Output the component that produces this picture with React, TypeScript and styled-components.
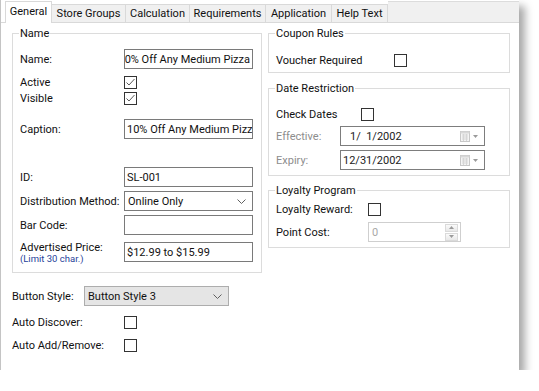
import React from 'react'
import styled, { createGlobalStyle } from 'styled-components'

const GlobalStyle = createGlobalStyle`
  body {
    margin: 0;
    background: #fff;
    font-family: Roboto, "Noto Sans", sans-serif;
    font-size: 11px;
    color: #111;
  }
`;

const Window = styled.div`
  box-sizing: border-box;
  width: 519px;
  height: 370px;
  background: #fff;
  border-left: 1px solid #c4c4c4;
  box-shadow: 6px 6px 8px rgba(0, 0, 0, 0.34);
  display: flex;
  flex-direction: column;
`;

const TabStrip = styled.div`
  display: flex;
  align-items: flex-end;
  height: 22px;
  padding-left: 4px;
  border-bottom: 1px solid #d9d9d9;
`;

const Tab = styled.div<{ $w: number; $active?: boolean }>`
  box-sizing: border-box;
  width: ${p => p.$w}px;
  height: ${p => (p.$active ? 22 : 18)}px;
  margin-bottom: ${p => (p.$active ? -1 : 0)}px;
  padding-bottom: ${p => (p.$active ? 2 : 0)}px;
  display: flex;
  align-items: center;
  justify-content: center;
  background: ${p => (p.$active ? '#fff' : '#f0f0f0')};
  border-top: 1px solid #d9d9d9;
  border-right: 1px solid #d9d9d9;
  white-space: nowrap;
  &:first-child {
    border-left: 1px solid #d9d9d9;
  }
`;

const TabFiller = styled.div`
  flex: 1;
  height: 20px;
  background: #f0f0f0;
  border-top: 1px solid #dcdcdc;
`;

const Body = styled.div`
  display: flex;
  gap: 6px;
  padding: 10px 9px 0 11px;
`;

const Column = styled.div<{ $w: number }>`
  width: ${p => p.$w}px;
  display: flex;
  flex-direction: column;
`;

const GroupBox = styled.div<{ $pt: number; $pb: number; $mt?: number }>`
  position: relative;
  border: 1px solid #dcdcdc;
  padding: ${p => p.$pt}px 7px ${p => p.$pb}px 7px;
  margin-top: ${p => p.$mt || 0}px;
`;

const Legend = styled.span`
  position: absolute;
  top: -8px;
  left: 6px;
  padding: 0 1px;
  line-height: 15px;
  background: #fff;
`;

const Row = styled.div<{ $mt?: number; $h?: number; $top?: boolean }>`
  display: flex;
  align-items: ${p => (p.$top ? 'flex-start' : 'center')};
  height: ${p => p.$h || 20}px;
  margin-top: ${p => p.$mt || 0}px;
`;

const Label = styled.span<{ $w: number; $muted?: boolean }>`
  width: ${p => p.$w}px;
  flex-shrink: 0;
  white-space: nowrap;
  color: ${p => (p.$muted ? '#8d8d8d' : 'inherit')};
`;

const LabelStack = styled.div<{ $w: number }>`
  width: ${p => p.$w}px;
  flex-shrink: 0;
  display: flex;
  flex-direction: column;
  line-height: 12px;
`;

const Hint = styled.span`
  font-size: 9.5px;
  line-height: 10px;
  color: #1f3f9a;
`;

const TextBox = styled.div<{ $w?: number; $end?: boolean }>`
  box-sizing: border-box;
  width: ${p => p.$w || 129}px;
  height: 20px;
  border: 1px solid #7a7a7a;
  background: #fff;
  padding: 0 2px;
  display: flex;
  align-items: center;
  justify-content: ${p => (p.$end ? 'flex-end' : 'flex-start')};
  overflow: hidden;
  white-space: nowrap;
`;

const Select = styled.div<{ $w: number; $flat?: boolean }>`
  box-sizing: border-box;
  width: ${p => p.$w}px;
  height: 20px;
  border: 1px solid ${p => (p.$flat ? '#adadad' : '#7a7a7a')};
  background: ${p => (p.$flat ? '#e5e5e5' : '#fff')};
  padding: 0 6px 0 3px;
  display: flex;
  align-items: center;
  justify-content: space-between;
  white-space: nowrap;
`;

const Check = styled.span`
  box-sizing: border-box;
  width: 13px;
  height: 13px;
  border: 1px solid #333;
  background: #fff;
  display: flex;
  align-items: center;
  justify-content: center;
`;

const DateBox = styled.div<{ $pl: number }>`
  box-sizing: border-box;
  width: 145px;
  height: 20px;
  border: 1px solid #7d7d7d;
  padding: 0 6px 0 ${p => p.$pl}px;
  display: flex;
  align-items: center;
  justify-content: space-between;
  color: #222;
  white-space: pre;
`;

const DateTools = styled.span`
  display: flex;
  align-items: center;
  gap: 3px;
`;

const SpinBox = styled.div`
  box-sizing: border-box;
  width: 93px;
  height: 20px;
  border: 1px solid #cfcfcf;
  padding: 0 2px 0 3px;
  display: flex;
  align-items: center;
  justify-content: space-between;
  color: #a8a8a8;
`;

const SpinButtons = styled.span`
  display: flex;
  flex-direction: column;
  gap: 1px;
`;

const SpinButton = styled.span`
  box-sizing: border-box;
  width: 13px;
  height: 8px;
  border: 1px solid #dadada;
  background: linear-gradient(#fafafa, #e8e8e8);
  display: flex;
  align-items: center;
  justify-content: center;
`;

const Chevron = () => (
  <svg width="9" height="5" viewBox="0 0 9 5">
    <polyline points="0.5,0.5 4.5,4.5 8.5,0.5" fill="none" stroke="#606060" strokeWidth="1" />
  </svg>
);

const CheckBox = ({ checked }: { checked?: boolean }) => (
  <Check>
    {checked && (
      <svg width="11" height="11" viewBox="0 0 11 11">
        <polyline points="1.5,5.5 4,8 9.5,2" fill="none" stroke="#5a5a5a" strokeWidth="1" />
      </svg>
    )}
  </Check>
);

const CalendarIcon = () => (
  <svg width="10" height="11" viewBox="0 0 10 11">
    <rect x="0.5" y="0.5" width="9" height="10" fill="#f4f4f4" stroke="#c8c8c8" />
    <rect x="0.5" y="0.5" width="9" height="2" fill="#d8d8d8" />
    <path d="M2 4h6M2 6h6M2 8h6M3.5 3v7M6.5 3v7" stroke="#d6d6d6" strokeWidth="1" />
  </svg>
);

const Arrow = ({ up }: { up?: boolean }) => (
  <svg width="5" height="3" viewBox="0 0 5 3">
    <polygon points={up ? '0,3 5,3 2.5,0' : '0,0 5,0 2.5,3'} fill="#9a9a9a" />
  </svg>
);

const tabs = [
  { name: 'General', w: 47 },
  { name: 'Store Groups', w: 74 },
  { name: 'Calculation', w: 64 },
  { name: 'Requirements', w: 76 },
  { name: 'Application', w: 66 },
  { name: 'Help Text', w: 56 },
];

const App = () => {
  return (
    <>
      <GlobalStyle />
      <Window>
        <TabStrip>
          {tabs.map((t, i) => (
            <Tab key={t.name} $w={t.w} $active={i === 0}>{t.name}</Tab>
          ))}
          <TabFiller />
        </TabStrip>
        <Body>
          <Column $w={250}>
            <GroupBox $pt={15} $pb={10}>
              <Legend>Name</Legend>
              <Row>
                <Label $w={104}>Name:</Label>
                <TextBox $end>10% Off Any Medium Pizza</TextBox>
              </Row>
              <Row $mt={5} $h={16}>
                <Label $w={104}>Active</Label>
                <CheckBox checked />
              </Row>
              <Row $h={16}>
                <Label $w={104}>Visible</Label>
                <CheckBox checked />
              </Row>
              <Row $mt={13}>
                <Label $w={104}>Caption:</Label>
                <TextBox>10% Off Any Medium Pizza</TextBox>
              </Row>
              <Row $mt={28}>
                <Label $w={104}>ID:</Label>
                <TextBox>SL-001</TextBox>
              </Row>
              <Row $mt={4}>
                <Label $w={104}>Distribution Method:</Label>
                <Select $w={129}>
                  Online Only
                  <Chevron />
                </Select>
              </Row>
              <Row $mt={4}>
                <Label $w={104}>Bar Code:</Label>
                <TextBox />
              </Row>
              <Row $mt={7} $top>
                <LabelStack $w={104}>
                  <span>Advertised Price:</span>
                  <Hint>(Limit 30 char.)</Hint>
                </LabelStack>
                <TextBox>$12.99 to $15.99</TextBox>
              </Row>
            </GroupBox>
            <Row $mt={13}>
              <Label $w={72}>Button Style:</Label>
              <Select $w={145} $flat>
                Button Style 3
                <Chevron />
              </Select>
            </Row>
            <Row $mt={6}>
              <Label $w={112}>Auto Discover:</Label>
              <CheckBox />
            </Row>
            <Row $mt={3}>
              <Label $w={112}>Auto Add/Remove:</Label>
              <CheckBox />
            </Row>
          </Column>
          <Column $w={242}>
            <GroupBox $pt={16} $pb={2}>
              <Legend>Coupon Rules</Legend>
              <Row>
                <Label $w={118}>Voucher Required</Label>
                <CheckBox />
              </Row>
            </GroupBox>
            <GroupBox $pt={15} $pb={5} $mt={15}>
              <Legend>Date Restriction</Legend>
              <Row>
                <Label $w={85}>Check Dates</Label>
                <CheckBox />
              </Row>
              <Row $mt={2}>
                <Label $w={64} $muted>Effective:</Label>
                <DateBox $pl={9}>
                  {'1/  1/2002'}
                  <DateTools><CalendarIcon /><Arrow /></DateTools>
                </DateBox>
              </Row>
              <Row $mt={4}>
                <Label $w={64} $muted>Expiry:</Label>
                <DateBox $pl={2}>
                  12/31/2002
                  <DateTools><CalendarIcon /><Arrow /></DateTools>
                </DateBox>
              </Row>
            </GroupBox>
            <GroupBox $pt={8} $pb={5} $mt={14}>
              <Legend>Loyalty Program</Legend>
              <Row>
                <Label $w={92}>Loyalty Reward:</Label>
                <CheckBox />
              </Row>
              <Row $mt={3}>
                <Label $w={92}>Point Cost:</Label>
                <SpinBox>
                  0
                  <SpinButtons>
                    <SpinButton><Arrow up /></SpinButton>
                    <SpinButton><Arrow /></SpinButton>
                  </SpinButtons>
                </SpinBox>
              </Row>
            </GroupBox>
          </Column>
        </Body>
      </Window>
    </>
  )
}

export default App
